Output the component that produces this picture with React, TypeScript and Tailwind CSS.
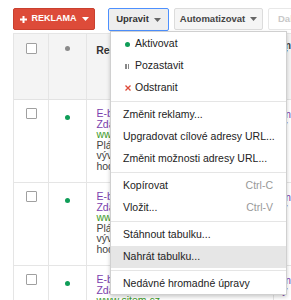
import React from "react";

interface Ad {
  title: string;
  line1: string;
  url: string;
  desc: string[];
}

const ads: Ad[] = [
  {
    title: "E-book zdarma",
    line1: "Zdarma ke stažení",
    url: "www.sitem.cz",
    desc: ["Plánování a", "vývoj webu krok", "hodnocení"],
  },
  {
    title: "E-book zdarma",
    line1: "Zdarma ke stažení",
    url: "www.sitem.cz",
    desc: ["Plánování a", "vývoj webu krok", "hodnocení"],
  },
  {
    title: "E-book zdarma",
    line1: "Zdarma ke stažení",
    url: "www.sitem.cz",
    desc: ["Plánování a", "vývoj webu krok", "hodnocení"],
  },
];

const Caret = ({ color = "#666" }: { color?: string }) => (
  <svg width="7" height="4" viewBox="0 0 7 4" className="ml-[5px]">
    <path d="M0 0h7L3.5 4z" fill={color} />
  </svg>
);

const Checkbox = () => (
  <div className="w-[11px] h-[11px] border border-[#a0a0a0] bg-white rounded-[1px]" />
);

const MenuItem = ({
  label,
  icon,
  shortcut,
  active,
}: {
  label: string;
  icon?: React.ReactNode;
  shortcut?: string;
  active?: boolean;
}) => (
  <div
    className={`h-[22px] flex items-center whitespace-nowrap pr-[13px] ${icon ? "pl-[14px]" : "pl-[12px]"} ${
      active ? "bg-[#e6e6e6]" : ""
    }`}
  >
    {icon && <span className="w-[10px] flex items-center">{icon}</span>}
    <span className="flex-1 text-[#222]">{label}</span>
    {shortcut && <span className="text-[#999]">{shortcut}</span>}
  </div>
);

const Sep = () => (
  <div className="py-[2px]">
    <div className="h-px bg-[#e5e5e5]" />
  </div>
);

export default function App() {
  return (
    <div
      className="relative w-[291px] h-[300px] overflow-hidden bg-white"
      style={{ fontFamily: '"Liberation Sans", Arial, sans-serif' }}
    >
      {/* toolbar */}
      <div className="h-[33px] flex items-start pt-[8px] pl-[13px]">
        <button className="shrink-0 w-[82px] h-[22px] bg-[#dd4b39] border border-[#c9402f] rounded-[2px] flex items-center justify-center text-white font-bold text-[9px]">
          <svg width="7" height="7" viewBox="0 0 7 7" className="mr-[5px]">
            <path d="M2.5 0h2v2.5H7v2H4.5V7h-2V4.5H0v-2h2.5z" fill="#fff" />
          </svg>
          REKLAMA
          <Caret color="#fff" />
        </button>
        <button className="shrink-0 ml-[13px] w-[61px] h-[23px] bg-[#eeeeee] border border-[#4d90fe] rounded-[2px] flex items-center justify-center text-[#333] font-bold text-[9.5px]">
          Upravit
          <Caret />
        </button>
        <button className="shrink-0 ml-[5px] w-[89px] h-[22px] bg-[#f5f5f5] border border-[#dcdcdc] rounded-[2px] flex items-center justify-center text-[#444] font-bold text-[9.5px]">
          Automatizovat
          <Caret />
        </button>
        <button className="shrink-0 ml-[5px] w-[40px] h-[22px] bg-white border border-[#e8e8e8] rounded-[2px] flex items-center pl-[9px] text-[#c8c8c8] font-bold text-[9.5px]">
          Další
        </button>
      </div>

      {/* table */}
      <div className="ml-[13px] border-l border-t border-[#e5e5e5]">
        <div className="h-[66px] flex bg-[#f4f4f4] border-b border-[#e2e2e2]">
          <div className="w-[36px] border-r border-[#e5e5e5] flex justify-center pt-[9px] pl-[1px]">
            <Checkbox />
          </div>
          <div className="w-[39px] border-r border-[#e5e5e5] flex justify-center pt-[12px]">
            <div className="w-[5px] h-[5px] rounded-full bg-[#8a8a8a]" />
          </div>
          <div className="w-[191px] border-r border-[#e5e5e5] pl-[9px] pt-[9px] text-[10.5px] font-bold text-[#333]">
            Reklama
          </div>
          <div className="pl-[8px] pt-[8px] text-[10.5px] leading-[7px] text-[#444] font-bold">
            m<br />y
          </div>
        </div>
        {ads.map((ad, i) => (
          <div key={i} className="h-[83px] flex border-b border-[#e5e5e5]">
            <div className="w-[36px] border-r border-[#e5e5e5] flex justify-center pt-[8px] pl-[1px]">
              <Checkbox />
            </div>
            <div className="w-[39px] border-r border-[#e5e5e5] flex justify-center pt-[15px]">
              <div className="w-[5px] h-[5px] rounded-full bg-[#0f9d58]" />
            </div>
            <div className="w-[191px] border-r border-[#e5e5e5] pl-[9px] pt-[8px] text-[10.5px] leading-[10.6px] whitespace-nowrap">
              <div className="text-[#7b3fae]">{ad.title}</div>
              <div className="text-[#7b3fae]">{ad.line1}</div>
              <div className="text-[#3d9a27]">{ad.url}</div>
              {ad.desc.map((d) => (
                <div key={d} className="text-[#444]">
                  {d}
                </div>
              ))}
            </div>
            <div className="pl-[8px] pt-[9px] text-[10.5px] leading-[10px] text-[#7b3fae]">
              m<br />y
            </div>
          </div>
        ))}
      </div>

      {/* dropdown menu */}
      <div className="absolute left-[110px] top-[31px] w-[177px] h-[264px] bg-white border border-[#d0d0d0] shadow-[0_2px_4px_rgba(0,0,0,0.2)] pt-[1px] text-[10.5px]">
        <MenuItem
          label="Aktivovat"
          icon={<span className="w-[5px] h-[5px] rounded-full bg-[#0f9d58]" />}
        />
        <MenuItem
          label="Pozastavit"
          icon={
            <span className="flex gap-[1px]">
              <span className="w-[1.5px] h-[5px] bg-[#888]" />
              <span className="w-[1.5px] h-[5px] bg-[#888]" />
            </span>
          }
        />
        <MenuItem
          label="Odstranit"
          icon={
            <svg width="6" height="6" viewBox="0 0 6 6">
              <path d="M0.5 0.5l5 5M5.5 0.5l-5 5" stroke="#dd4b39" strokeWidth="1.3" />
            </svg>
          }
        />
        <Sep />
        <MenuItem label="Změnit reklamy..." />
        <MenuItem label="Upgradovat cílové adresy URL..." />
        <MenuItem label="Změnit možnosti adresy URL..." />
        <Sep />
        <MenuItem label="Kopírovat" shortcut="Ctrl-C" />
        <MenuItem label="Vložit..." shortcut="Ctrl-V" />
        <Sep />
        <MenuItem label="Stáhnout tabulku..." />
        <MenuItem label="Nahrát tabulku..." active />
        <Sep />
        <MenuItem label="Nedávné hromadné úpravy" />
      </div>
    </div>
  );
}
